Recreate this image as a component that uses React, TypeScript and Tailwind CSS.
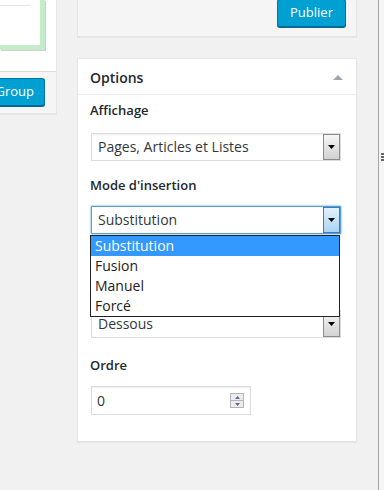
import React from "react"

const font = "font-['Open_Sans','Liberation_Sans',sans-serif]"

function Arrow({ focused = false }: { focused?: boolean }) {
  return (
    <div
      className={`w-[17px] self-stretch flex items-center justify-center border bg-linear-to-b ${
        focused
          ? "border-[#3c7fb1] from-[#e3f1fc] to-[#a9d4f3]"
          : "border-[#8a8a8a] from-[#f6f6f6] to-[#d2d2d2]"
      }`}
    >
      <svg width="7" height="4" viewBox="0 0 7 4">
        <path d="M0 0h7L3.5 4z" fill="#000" />
      </svg>
    </div>
  )
}

function Select({ value, focused = false }: { value: string; focused?: boolean }) {
  return (
    <div
      className={`ml-px w-[250px] h-[28px] flex items-stretch bg-white border ${
        focused
          ? "border-[#5b9dd9] shadow-[0_0_2px_rgba(30,140,190,0.8)]"
          : "border-[#dddddd] shadow-[inset_0_1px_2px_rgba(0,0,0,0.07)]"
      }`}
    >
      <span className="flex-1 pl-[6px] text-[14px] leading-[26px] text-[#32373c] whitespace-nowrap">
        {value}
      </span>
      <Arrow focused={focused} />
    </div>
  )
}

function Label({ children, className = "" }: { children: React.ReactNode; className?: string }) {
  return (
    <div className={`text-[13px] leading-[18px] font-semibold text-[#23282d] ${className}`}>
      {children}
    </div>
  )
}

export default function App() {
  const choices = ["Substitution", "Fusion", "Manuel", "Forcé"]

  return (
    <div className={`w-[384px] h-[490px] bg-[#f1f1f1] flex overflow-hidden ${font}`}>
      {/* left panel, mostly cut off */}
      <div className="w-[57px] shrink-0">
        <div className="border-r border-b border-[#e5e5e5] bg-white shadow-[0_1px_1px_rgba(0,0,0,0.04)]">
          <div className="h-[72px] border-b border-[#dddddd] bg-white">
            <div className="w-[45px] h-[50px] bg-white border-r-[5px] border-b-[5px] border-[#c4ecc9] shadow-[1px_1px_0_#cfcfcf] pt-[5px]">
              <div className="w-[30px] h-px bg-[#e6e6e6]"></div>
            </div>
          </div>
          <div className="h-[41px] bg-[#f5f5f5] flex justify-end items-start pt-[6px] pr-[11px]">
            <button className="shrink-0 h-[28px] px-[10px] rounded-[3px] bg-[#00a0d2] border border-[#0073aa] border-b-[#006799] shadow-[0_1px_0_#006799] text-white text-[13px] whitespace-nowrap">
              Group
            </button>
          </div>
        </div>
      </div>

      {/* sidebar */}
      <div className="w-[280px] ml-[20px] shrink-0">
        <div className="-mt-px border border-t-0 border-[#e5e5e5] bg-[#f5f5f5] shadow-[0_1px_1px_rgba(0,0,0,0.04)] flex justify-end pr-[10px] pb-[9px]">
          <button className="w-[69px] h-[28px] rounded-[3px] bg-[#00a0d2] border border-[#0073aa] border-b-[#006799] shadow-[0_1px_0_#006799] text-white text-[13px]">
            Publier
          </button>
        </div>

        <div className="mt-[21px] border border-[#e5e5e5] bg-white shadow-[0_1px_1px_rgba(0,0,0,0.04)]">
          <div className="h-[36px] border-b border-[#eeeeee] pl-[12px] pr-[13px] pt-px flex items-center justify-between">
            <span className="text-[14px] font-semibold text-[#23282d]">Options</span>
            <svg width="10" height="5" viewBox="0 0 10 5">
              <path d="M0 5L5 0l5 5z" fill="#a0a5aa" />
            </svg>
          </div>

          <div className="px-[12px] pt-[6px] pb-[26px]">
            <Label>Affichage</Label>
            <div className="mt-[14px]">
              <Select value="Pages, Articles et Listes" />
            </div>

            <Label className="mt-[15px]">Mode d'insertion</Label>
            <div className="mt-[12px] relative">
              <Select value="Substitution" focused />
              <ul className="absolute z-10 left-0 top-[29px] w-[250px] bg-white border border-[#222]">
                {choices.map((c, i) => (
                  <li
                    key={c}
                    className={`h-[20px] px-[4px] text-[14px] leading-[20px] ${
                      i === 0 ? "bg-[#3399ff] text-white" : "text-[#222]"
                    }`}
                  >
                    {c}
                  </li>
                ))}
              </ul>
            </div>

            {/* field hidden under the open list */}
            <div className="mt-[76px]">
              <Select value="Dessous" />
            </div>

            <Label className="mt-[18px]">Ordre</Label>
            <div className="mt-[12px] ml-px w-[160px] h-[29px] border border-[#dddddd] bg-white shadow-[inset_0_1px_2px_rgba(0,0,0,0.07)] flex items-center pl-[5px] pr-[6px]">
              <span className="flex-1 text-[14px] text-[#32373c]">0</span>
              <div className="w-[14px] flex flex-col border border-[#b4b4b4]">
                <div className="h-[7px] bg-[#ececec] border-b border-[#b4b4b4] flex items-center justify-center">
                  <svg width="5" height="3" viewBox="0 0 5 3">
                    <path d="M0 3L2.5 0 5 3z" fill="#5a6aa0" />
                  </svg>
                </div>
                <div className="h-[6px] bg-[#ececec] flex items-center justify-center">
                  <svg width="5" height="3" viewBox="0 0 5 3">
                    <path d="M0 0h5L2.5 3z" fill="#5a6aa0" />
                  </svg>
                </div>
              </div>
            </div>
          </div>
        </div>
      </div>

      {/* window edge */}
      <div className="ml-[21px] w-px h-full bg-[#a3a3a3] shrink-0"></div>
      <div className="flex-1 bg-[#f5f5f5] pl-[2px] pt-[153px] flex flex-col gap-px">
        <div className="w-[3px] h-[2px] bg-[#666]"></div>
        <div className="w-[3px] h-[2px] bg-[#666]"></div>
        <div className="w-[3px] h-[2px] bg-[#666]"></div>
      </div>
    </div>
  )
}
